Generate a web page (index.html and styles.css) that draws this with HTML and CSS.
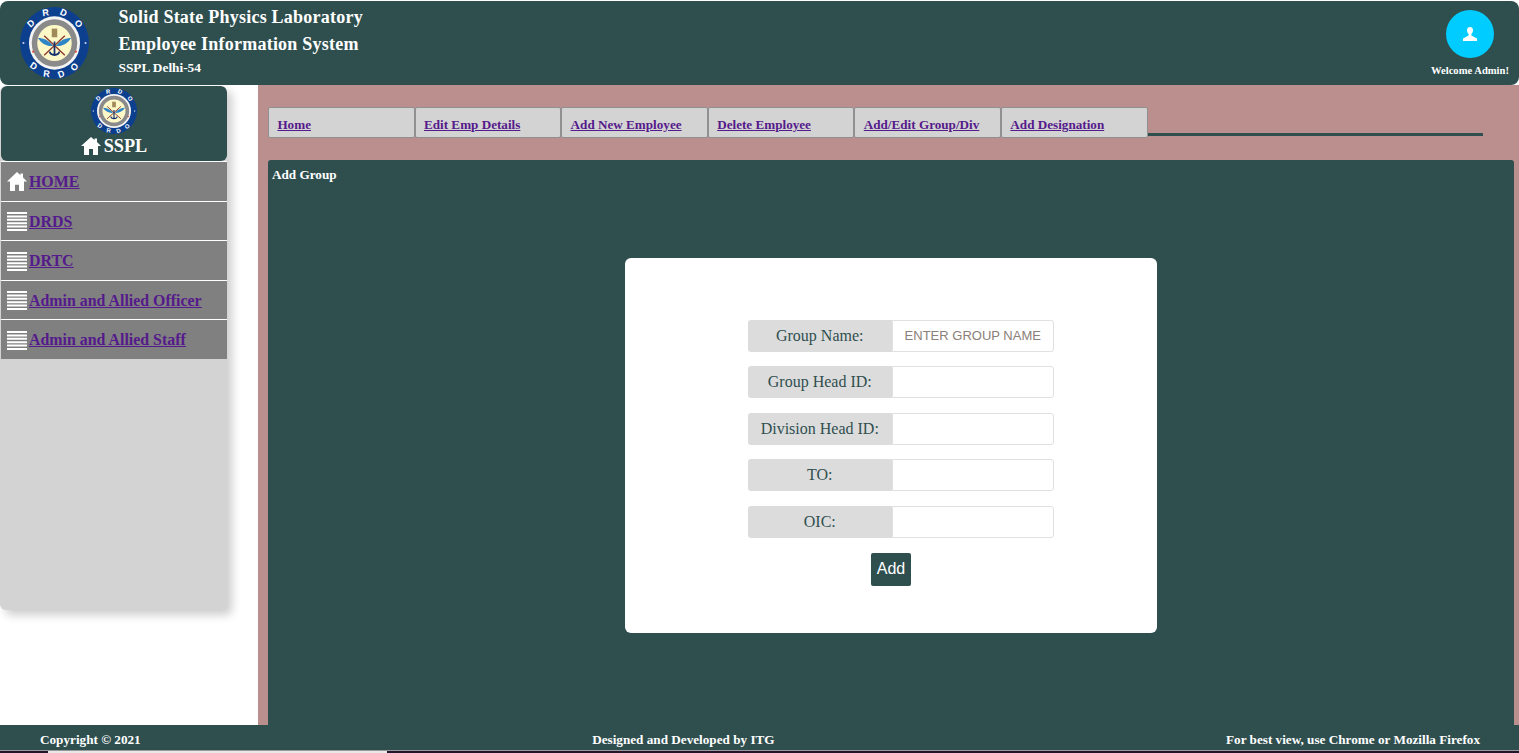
FILE: index.html
```html
<!DOCTYPE html>
<html>
<head>
    <title>Employee Information System</title>
    <link rel="stylesheet" href="styles.css">
</head>
<body>
    <!-- Shared icons -->
    <svg class="defs" width="0" height="0">
        <defs>
            <symbol id="logo" viewBox="0 0 100 100" preserveAspectRatio="none">
                <circle cx="50" cy="50" r="50" fill="#0d3f8f"/>
                <path id="arc-top" d="M11 50a39 39 0 0 1 78 0" fill="none"/>
                <path id="arc-bottom" d="M2 50a48 48 0 0 0 96 0" fill="none"/>
                <text class="logo-text"><textPath href="#arc-top" startOffset="55.500%" text-anchor="middle">DRDO</textPath></text>
                <text class="logo-text"><textPath href="#arc-bottom" startOffset="54.500%" text-anchor="middle">DRDO</textPath></text>
                <circle cx="50" cy="50" r="37" fill="#f4f4f4"/>
                <circle cx="50" cy="50" r="33" fill="#8a8a8a"/>
                <circle cx="50" cy="50" r="25" fill="#fdf8c8"/>
                <circle cx="5" cy="50" r="1.500" fill="#cfd8ea"/>
                <circle cx="95" cy="50" r="1.500" fill="#cfd8ea"/>
                <circle cx="19" cy="62" r="1.500" fill="#e04a3a"/>
                <circle cx="81" cy="62" r="1.500" fill="#e04a3a"/>
                <path d="M26 43c8 0 16 3 22 11-9 1-17-3-22-11zM74 43c-8 0-16 3-22 11 9 1 17-3 22-11z" fill="#2f86c6"/>
                <path d="M35 40l30 27M65 40L35 67" stroke="#8c3a2a" stroke-width="2"/>
                <path d="M50 48v20M43 62c1 6 13 6 14 0" stroke="#12306f" stroke-width="2.500" fill="none"/>
                <path d="M46 30h8v12h-8z" fill="#a08a5a"/>
            </symbol>
            <symbol id="home" viewBox="0 0 20 18" preserveAspectRatio="none">
                <path d="M10 0l3.500 3V1.500H16v3.600L20 9h-3v9h-5v-6H8v6H3V9H0z" fill="#fff"/>
            </symbol>
            <symbol id="list" viewBox="0 0 18 19" preserveAspectRatio="none">
                <path d="M0 0h18v2H0zM0 3.400h18v2H0zM0 6.800h18v2H0zM0 10.200h18v2H0zM0 13.600h18v2H0zM0 17h18v2H0z" fill="#fff"/>
            </symbol>
        </defs>
    </svg>

    <div class="page">
        <!-- Top banner -->
        <header class="banner">
            <svg class="banner-logo"><use href="#logo"/></svg>
            <div class="banner-titles">
                <div class="banner-title">Solid State Physics Laboratory</div>
                <div class="banner-title">Employee Information System</div>
                <div class="banner-sub">SSPL Delhi-54</div>
            </div>
            <div class="user-box">
                <div class="user-circle">
                    <svg width="16" height="16" viewBox="0 0 16 16">
                        <path d="M8 1c2 0 3 1.500 3 3.300 0 1.500-.8 3-1.600 3.700v1.500L15 12.500V15H1v-2.500l5.600-3V8C5.800 7.300 5 5.800 5 4.300 5 2.500 6 1 8 1z" fill="#fff"/>
                    </svg>
                </div>
                <div class="user-text">Welcome Admin!</div>
            </div>
        </header>

        <div class="middle">
            <!-- Left navigation -->
            <aside class="sidebar">
                <div class="side-head">
                    <svg class="side-logo"><use href="#logo"/></svg>
                    <div class="side-title"><svg class="side-home"><use href="#home"/></svg>SSPL</div>
                </div>
                <a class="side-item" href="#"><svg class="side-icon"><use href="#home"/></svg><span class="side-link">HOME</span></a>
                <a class="side-item" href="#"><svg class="side-icon"><use href="#list"/></svg><span class="side-link">DRDS</span></a>
                <a class="side-item" href="#"><svg class="side-icon"><use href="#list"/></svg><span class="side-link">DRTC</span></a>
                <a class="side-item" href="#"><svg class="side-icon"><use href="#list"/></svg><span class="side-link">Admin and Allied Officer</span></a>
                <a class="side-item" href="#"><svg class="side-icon"><use href="#list"/></svg><span class="side-link">Admin and Allied Staff</span></a>
            </aside>

            <main class="content">
                <!-- Tabs -->
                <nav class="tabs">
                    <a class="tab" href="#">Home</a>
                    <a class="tab" href="#">Edit Emp Details</a>
                    <a class="tab" href="#">Add New Employee</a>
                    <a class="tab" href="#">Delete Employee</a>
                    <a class="tab" href="#">Add/Edit Group/Div</a>
                    <a class="tab" href="#">Add Designation</a>
                    <div class="tab-line"></div>
                </nav>

                <section class="panel">
                    <div class="panel-title">Add Group</div>
                    <form class="card">
                        <div class="form-row">
                            <label class="form-label">Group Name:</label>
                            <input class="form-input" type="text" placeholder="ENTER GROUP NAME">
                        </div>
                        <div class="form-row">
                            <label class="form-label">Group Head ID:</label>
                            <input class="form-input" type="text">
                        </div>
                        <div class="form-row">
                            <label class="form-label">Division Head ID:</label>
                            <input class="form-input" type="text">
                        </div>
                        <div class="form-row">
                            <label class="form-label">TO:</label>
                            <input class="form-input" type="text">
                        </div>
                        <div class="form-row">
                            <label class="form-label">OIC:</label>
                            <input class="form-input" type="text">
                        </div>
                        <button class="add-button" type="button">Add</button>
                    </form>
                </section>
            </main>
        </div>

        <footer class="footer">
            <span>Copyright © 2021</span>
            <span>Designed and Developed by ITG</span>
            <span>For best view, use Chrome or Mozilla Firefox</span>
        </footer>
        <div class="strip"><div class="strip-light"></div></div>
    </div>
</body>
</html>
```

FILE: styles.css
```css
html, body {
    margin: 0;
    height: 100%;
    overflow: hidden;
    background-color: #fff;
    font-family: "Liberation Serif", "Times New Roman", serif;
}

a {
    color: #551a8b;
}

.defs {
    display: block;
    height: 0;
}

.logo-text {
    font-family: "Liberation Sans", Arial, sans-serif;
    font-size: 13px;
    font-weight: bold;
    letter-spacing: 14px;
    fill: #fff;
}

.page {
    display: flex;
    flex-direction: column;
    height: 753px;
}

/* Banner */
.banner {
    display: flex;
    align-items: flex-start;
    height: 84px;
    margin-top: 1px;
    flex-shrink: 0;
    background-color: #2f4f4f;
    border-radius: 8px;
    color: #fff;
    box-sizing: border-box;
}

.banner-logo {
    width: 69px;
    height: 72px;
    margin: 6px 0 0 20px;
}

.banner-titles {
    margin-left: 29.500px;
    font-weight: bold;
}

.banner-title {
    font-size: 18px;
    line-height: 26.500px;
    letter-spacing: 0.23px;
}

.banner-title:first-child {
    margin-top: 3px;
}

.banner-sub {
    font-size: 13.300px;
    line-height: 20px;
    margin-top: 1px;
}

.user-box {
    margin-left: auto;
    width: 88px;
    margin-right: 5px;
    text-align: center;
}

.user-circle {
    display: flex;
    align-items: center;
    justify-content: center;
    width: 48px;
    height: 48px;
    margin: 9px auto 0;
    border-radius: 50%;
    background-color: #00ccff;
}

.user-text {
    margin-top: 7px;
    font-size: 10.600px;
    font-weight: bold;
    white-space: nowrap;
}

/* Middle area */
.middle {
    display: flex;
    flex: 1;
    min-height: 0;
}

.sidebar {
    width: 227px;
    height: 524px;
    margin: 1px 0 0 0;
    flex-shrink: 0;
    background-color: #d3d3d3;
    border-radius: 6px;
    box-shadow: 5px 5px 10px rgba(0, 0, 0, 0.2);
    overflow: hidden;
    box-sizing: border-box;
    padding-left: 1px;
}

.side-head {
    display: flex;
    flex-direction: column;
    align-items: center;
    height: 75px;
    background-color: #2f4f4f;
    border-radius: 6px;
    color: #fff;
}

.side-logo {
    width: 46px;
    height: 46px;
    margin-top: 2px;
}

.side-title {
    display: flex;
    align-items: center;
    font-size: 18.200px;
    font-weight: bold;
    line-height: 24px;
}

.side-home {
    width: 20px;
    height: 18px;
    margin-right: 3px;
}

.side-item {
    display: flex;
    align-items: center;
    height: 39.600px;
    box-sizing: border-box;
    border-top: 1.600px solid #fff;
    padding: 1.400px 0 0 6px;
    background-color: #808080;
    font-size: 15.900px;
    font-weight: bold;
}

.side-icon {
    width: 20px;
    height: 19px;
    margin-right: 2px;
}

.side-link {
    text-decoration: underline;
}

/* Right side */
.content {
    flex: 1;
    margin-left: 31px;
    padding: 22px 5px 0 10px;
    background-color: #bc8f8f;
    display: flex;
    flex-direction: column;
    min-width: 0;
}

.tabs {
    display: flex;
    align-items: flex-end;
    height: 31px;
    flex-shrink: 0;
}

.tab {
    width: 146.600px;
    height: 31px;
    box-sizing: border-box;
    padding: 9px 8.400px 0;
    background-color: #d3d3d3;
    border: 1px solid #909090;
    border-radius: 2px;
    font-size: 13.150px;
    font-weight: bold;
    line-height: 16px;
}

.tab-line {
    width: 335px;
    height: 3px;
    margin-bottom: 2px;
    background-color: #2f4f4f;
}

.panel {
    flex: 1;
    margin-top: 22px;
    background-color: #2f4f4f;
    border-radius: 3px 3px 0 0;
    color: #fff;
    min-height: 0;
}

.panel-title {
    height: 98px;
    box-sizing: border-box;
    padding: 7px 0 0 4px;
    font-size: 13.200px;
    font-weight: bold;
    line-height: 16px;
}

.card {
    width: 532px;
    height: 375px;
    margin: 0 auto;
    padding: 61.900px 0 0 123px;
    box-sizing: border-box;
    background-color: #fff;
    border-radius: 6px;
}

.form-row {
    display: flex;
    width: 306px;
    height: 32px;
    margin-bottom: 14.500px;
}

.form-label {
    display: flex;
    align-items: center;
    justify-content: center;
    width: 143.500px;
    background-color: #dcdcdc;
    border-radius: 3px 0 0 3px;
    color: #2f4f4f;
    font-size: 16px;
}

.form-input {
    width: 162.500px;
    box-sizing: border-box;
    border: 1px solid #e0e0e0;
    border-radius: 0 3px 3px 0;
    padding: 0 6px;
    font-family: "Liberation Sans", Arial, sans-serif;
    font-size: 13px;
    text-align: center;
}

.form-input::placeholder {
    color: #8a8078;
    opacity: 1;
}

.add-button {
    display: block;
    width: 40px;
    height: 33px;
    margin: 15.100px 0 0 123px;
    padding: 0;
    border: none;
    border-radius: 2px;
    background-color: #2f4f4f;
    color: #fff;
    font-family: "Liberation Sans", Arial, sans-serif;
    font-size: 16px;
}

/* Footer */
.footer {
    display: flex;
    justify-content: space-between;
    align-items: center;
    height: 25px;
    flex-shrink: 0;
    box-sizing: border-box;
    padding: 4px 39px 0 40px;
    background-color: #2f4f4f;
    color: #fff;
    font-size: 13.200px;
    font-weight: bold;
}

.strip {
    height: 3px;
    flex-shrink: 0;
    padding-left: 48px;
    box-sizing: border-box;
    background-color: #24142e;
    border-top: 1px solid #999;
}

.strip-light {
    width: 339px;
    height: 2px;
    background-color: #e8e8e8;
}
```
